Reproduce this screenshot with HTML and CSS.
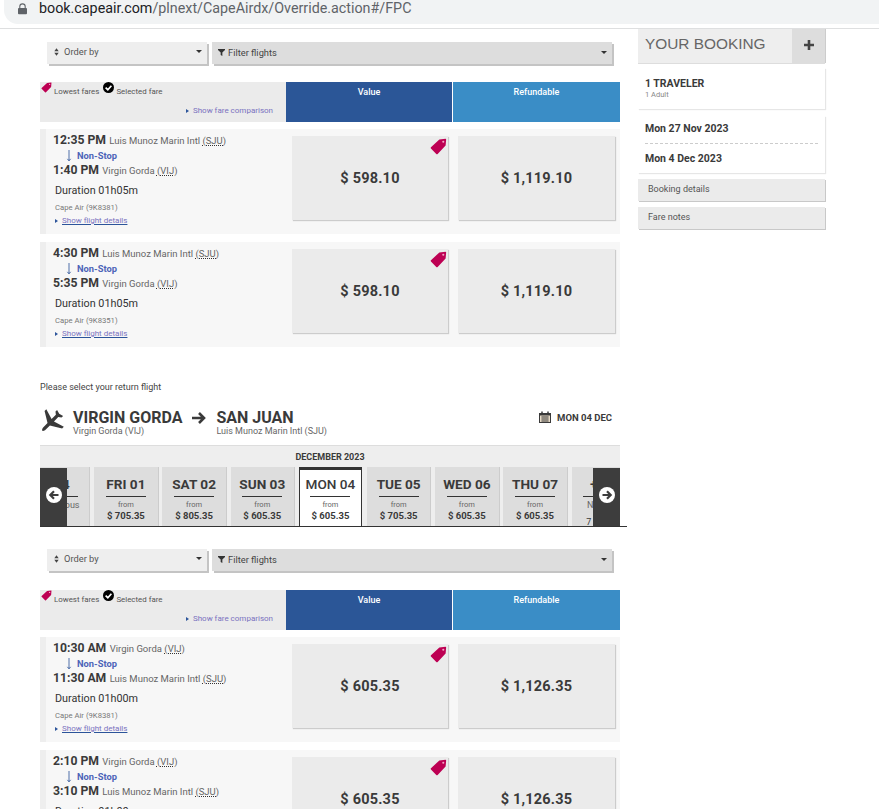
FILE: index.html
```html
<!DOCTYPE html>
<html lang="en">
<head>
<meta charset="utf-8">
<title>Cape Air booking</title>
<link rel="stylesheet" href="styles.css">
</head>
<body>
<svg class="defs" width="0" height="0" aria-hidden="true">
  <symbol id="tag" viewBox="0 0 16 16"><path d="M8.800 1.400 14.600.8c.4 0 .6.2.6.6l-.5 5.700-7.500 7.900c-.4.400-.9.400-1.300 0L.9 9.900c-.4-.4-.4-.9 0-1.300z" fill="#bd0053"/><circle cx="12.500" cy="3.500" r="1" fill="#f3a6c6"/></symbol>
  <symbol id="check" viewBox="0 0 16 16"><circle cx="8" cy="8" r="8" fill="#000"/><path d="M3.800 8.200 7 11.200l5.200-5.800" fill="none" stroke="#fff" stroke-width="2.400"/></symbol>
  <symbol id="down" viewBox="0 0 8 16"><path d="M4 0v14M1.800 11.800 4 14.500l2.200-2.700" fill="none" stroke="#2c549a" stroke-width="1.100"/></symbol>
  <symbol id="sort" viewBox="0 0 8 12"><path d="M4 0 7.500 4.800H.5zM4 12 .5 7.200h7z" fill="#444"/></symbol>
  <symbol id="funnel" viewBox="0 0 10 10"><path d="M0 0h10v1.300L6.200 5v5L3.800 8.500V5L0 1.300z" fill="#333"/></symbol>
  <symbol id="left" viewBox="0 0 16 16"><circle cx="8" cy="8" r="8" fill="#fff"/><path d="M12.500 8H5M8 4.300 4.300 8 8 11.700" fill="none" stroke="#3d3d3d" stroke-width="2.200"/></symbol>
  <symbol id="right" viewBox="0 0 16 16"><circle cx="8" cy="8" r="8" fill="#fff"/><path d="M3.500 8H11M8 4.300 11.700 8 8 11.700" fill="none" stroke="#3d3d3d" stroke-width="2.200"/></symbol>
</svg>

<header class="address">
  <div class="address-pill">
    <svg class="lock" viewBox="0 0 10 12"><path d="M2 5V3.300a3 3 0 0 1 6 0V5" fill="none" stroke="#5f6368" stroke-width="1.200"/><rect y="4.800" width="10" height="7" rx="1" fill="#5f6368"/></svg>
    <span class="url">book.capeair.com<span class="url-path">/plnext/CapeAirdx/Override.action#/FPC</span></span>
  </div>
</header>

<div class="page">
  <main class="flights">
    <div class="toolbar">
      <div class="select select-order"><svg class="ico-sort"><use href="#sort"/></svg><span class="select-label">Order by</span><i class="caret"></i></div>
      <div class="select select-filter"><svg class="ico-funnel"><use href="#funnel"/></svg><span class="select-label dark">Filter flights</span><i class="caret"></i></div>
    </div>
    <div class="fare-head">
      <div class="legend">
        <div class="legend-top"><svg class="ico-tag-s"><use href="#tag"/></svg><span>Lowest fares</span><svg class="ico-check"><use href="#check"/></svg><span>Selected fare</span></div>
        <div class="compare"><i class="tri"></i>Show fare comparison</div>
      </div>
      <div class="fare-col value">Value</div>
      <div class="fare-col refund">Refundable</div>
    </div>

    <article class="flight">
      <div class="info">
        <div class="line"><b>12:35 PM</b> Luis Munoz Marin Intl <abbr>(SJU)</abbr></div>
        <div class="stop"><svg class="ico-down"><use href="#down"/></svg>Non-Stop</div>
        <div class="line"><b>1:40 PM</b> Virgin Gorda <abbr>(VIJ)</abbr></div>
        <div class="duration">Duration 01h05m</div>
        <div class="carrier">Cape Air (9K8381)</div>
        <div class="details"><i class="tri"></i><a href="#">Show flight details</a></div>
      </div>
      <div class="fare">$ 598.10<svg class="ico-tag"><use href="#tag"/></svg></div>
      <div class="fare">$ 1,119.10</div>
    </article>
    <article class="flight">
      <div class="info">
        <div class="line"><b>4:30 PM</b> Luis Munoz Marin Intl <abbr>(SJU)</abbr></div>
        <div class="stop"><svg class="ico-down"><use href="#down"/></svg>Non-Stop</div>
        <div class="line"><b>5:35 PM</b> Virgin Gorda <abbr>(VIJ)</abbr></div>
        <div class="duration">Duration 01h05m</div>
        <div class="carrier">Cape Air (9K8351)</div>
        <div class="details"><i class="tri"></i><a href="#">Show flight details</a></div>
      </div>
      <div class="fare">$ 598.10<svg class="ico-tag"><use href="#tag"/></svg></div>
      <div class="fare">$ 1,119.10</div>
    </article>

    <p class="prompt">Please select your return flight</p>
    <div class="route">
      <svg class="plane" viewBox="0 0 24 24"><path transform="rotate(225 12 12)" d="M23 16.500v-2.200l-9.500-5.800V3c0-1-.7-2.500-1.500-2.500S10.500 2 10.500 3v5.500L1 14.300v2.200l9.500-2.900V19l-2.300 1.800v2L12 21.700l3.800 1.100v-2L13.500 19v-5.400z" fill="#3a3a3a"/></svg>
      <div class="place"><div class="city">VIRGIN GORDA</div><div class="airport">Virgin Gorda (VIJ)</div></div>
      <svg class="route-arrow" viewBox="0 0 14 12"><path d="M0 6h11M7 1l5 5-5 5" fill="none" stroke="#3a3a3a" stroke-width="2.600"/></svg>
      <div class="place"><div class="city">SAN JUAN</div><div class="airport">Luis Munoz Marin Intl (SJU)</div></div>
      <div class="route-date">
        <svg class="ico-cal" viewBox="0 0 12 12"><path d="M0 2h12v10H0z" fill="#3a3a3a"/><path d="M1 4.500h10V11H1z" fill="#e8dcc8"/><path d="M3 .5v3M9 .5v3" stroke="#3a3a3a" stroke-width="1.500"/><path d="M2 6h8M2 8h8M2 10h8M4 5v6M6 5v6M8 5v6" stroke="#3a3a3a" stroke-width=".6"/></svg>
        MON 04 DEC
      </div>
    </div>

    <section class="calendar">
      <div class="month">DECEMBER 2023</div>
      <div class="days">
        <div class="day"><div class="day-name">- 14</div><div class="from from-prev">Previous</div></div>
        <div class="day"><div class="day-name">FRI 01</div><div class="from">from</div><div class="price">$ 705.35</div></div>
        <div class="day"><div class="day-name">SAT 02</div><div class="from">from</div><div class="price">$ 805.35</div></div>
        <div class="day"><div class="day-name">SUN 03</div><div class="from">from</div><div class="price">$ 605.35</div></div>
        <div class="day day-active"><div class="day-name">MON 04</div><div class="from">from</div><div class="price">$ 605.35</div></div>
        <div class="day"><div class="day-name">TUE 05</div><div class="from">from</div><div class="price">$ 705.35</div></div>
        <div class="day"><div class="day-name">WED 06</div><div class="from">from</div><div class="price">$ 605.35</div></div>
        <div class="day"><div class="day-name">THU 07</div><div class="from">from</div><div class="price">$ 605.35</div></div>
        <div class="day"><div class="day-name">+ 14</div><div class="from from-next">Next</div><div class="more">7 days</div></div>
      </div>
      <div class="nav nav-prev"><svg class="ico-nav"><use href="#left"/></svg></div>
      <div class="nav nav-next"><svg class="ico-nav"><use href="#right"/></svg></div>
    </section>

    <div class="toolbar toolbar-second">
      <div class="select select-order"><svg class="ico-sort"><use href="#sort"/></svg><span class="select-label">Order by</span><i class="caret"></i></div>
      <div class="select select-filter"><svg class="ico-funnel"><use href="#funnel"/></svg><span class="select-label dark">Filter flights</span><i class="caret"></i></div>
    </div>
    <div class="fare-head">
      <div class="legend">
        <div class="legend-top"><svg class="ico-tag-s"><use href="#tag"/></svg><span>Lowest fares</span><svg class="ico-check"><use href="#check"/></svg><span>Selected fare</span></div>
        <div class="compare"><i class="tri"></i>Show fare comparison</div>
      </div>
      <div class="fare-col value">Value</div>
      <div class="fare-col refund">Refundable</div>
    </div>

    <article class="flight">
      <div class="info">
        <div class="line"><b>10:30 AM</b> Virgin Gorda <abbr>(VIJ)</abbr></div>
        <div class="stop"><svg class="ico-down"><use href="#down"/></svg>Non-Stop</div>
        <div class="line"><b>11:30 AM</b> Luis Munoz Marin Intl <abbr>(SJU)</abbr></div>
        <div class="duration">Duration 01h00m</div>
        <div class="carrier">Cape Air (9K8381)</div>
        <div class="details"><i class="tri"></i><a href="#">Show flight details</a></div>
      </div>
      <div class="fare">$ 605.35<svg class="ico-tag"><use href="#tag"/></svg></div>
      <div class="fare">$ 1,126.35</div>
    </article>
    <article class="flight">
      <div class="info">
        <div class="line"><b>2:10 PM</b> Virgin Gorda <abbr>(VIJ)</abbr></div>
        <div class="stop"><svg class="ico-down"><use href="#down"/></svg>Non-Stop</div>
        <div class="line"><b>3:10 PM</b> Luis Munoz Marin Intl <abbr>(SJU)</abbr></div>
        <div class="duration">Duration 01h00m</div>
      </div>
      <div class="fare">$ 605.35<svg class="ico-tag"><use href="#tag"/></svg></div>
      <div class="fare">$ 1,126.35</div>
    </article>
  </main>

  <aside class="booking">
    <div class="booking-head"><span class="booking-title">YOUR BOOKING</span><span class="booking-plus"><svg class="ico-plus" viewBox="0 0 10 10"><path d="M5 0v10M0 5h10" stroke="#444" stroke-width="2.600"/></svg></span></div>
    <div class="card travelers"><div class="card-strong">1 TRAVELER</div><div class="card-small">1 Adult</div></div>
    <div class="card dates">
      <div class="date">Mon 27 Nov 2023</div>
      <div class="date date-last">Mon 4 Dec 2023</div>
    </div>
    <div class="panel">Booking details</div>
    <div class="panel">Fare notes</div>
  </aside>
</div>
</body>
</html>
```

FILE: styles.css
```css
* { box-sizing: border-box; }
html, body { margin: 0; padding: 0; height: 809px; overflow: hidden; background: #fff; }
body { font-family: Roboto, "Liberation Sans", sans-serif; color: #3a3a3a; }
.defs { position: absolute; }

.address { height: 29px; border-bottom: 1px solid #dedfe0; padding: 0 0 4px 4px; }
.address-pill { height: 24px; background: #f1f3f4; border-bottom-left-radius: 14px; display: flex; align-items: center; padding-left: 14px; }
.lock { width: 9px; height: 12px; margin-right: 12px; margin-top: -7px; }
.url { font: 14.300px Roboto, sans-serif; color: #202124; margin-top: -9px; white-space: nowrap; }
.url-path { color: #5f6368; }

.page { display: flex; padding-left: 40px; }
.flights { width: 580px; flex: none; }
.booking { width: 187px; margin-left: 18px; flex: none; }

.toolbar { display: flex; height: 53px; padding: 13px 0 0 7px; gap: 5px; }
.toolbar-second { height: 63px; padding-top: 22px; }
.select { height: 22px; display: flex; align-items: center; box-shadow: 2px 2px 0 #c4c4c4; position: relative; font-size: 9.300px; padding-bottom: 1px; }
.select-order { width: 160px; background: #eee; padding-left: 7px; padding-bottom: 3px; }
.select-filter { width: 400px; background: #ddd; padding-left: 6px; }
.select-label { margin-left: 5px; color: #555; }
.select-label.dark { margin-left: 3px; color: #444; }
.ico-sort { width: 5px; height: 8px; }
.ico-funnel { width: 7px; height: 7px; }
.caret { margin-left: auto; margin-right: 5px; width: 0; height: 0; border-left: 3px solid transparent; border-right: 3px solid transparent; border-top: 3px solid #333; }

.fare-head { display: flex; height: 40px; margin-bottom: 7px; }
.legend { width: 246px; background: #ebebeb; padding-right: 13px; font-size: 7.900px; color: #555; }
.legend-top { display: flex; align-items: center; height: 16px; padding-left: 1px; }
.legend-top span { margin-left: 2px; margin-top: 2px; }
.ico-tag-s { width: 11px; height: 11px; margin-top: -5px; }
.ico-check { width: 11px; height: 11px; margin-left: 4px; margin-top: -5px; }
.compare { text-align: right; margin-top: 7px; color: #7a72c0; font-size: 8px; line-height: 12px; }
.tri { display: inline-block; width: 0; height: 0; border-top: 2.500px solid transparent; border-bottom: 2.500px solid transparent; border-left: 3px solid #2c549a; margin-right: 4px; }
.fare-col { color: #fff; font-size: 9px; font-weight: 500; text-align: center; padding-top: 5px; line-height: 11px; }
.value { width: 167px; background: #2b5697; border-right: 1px solid #fff; padding-right: 0; }
.refund { width: 167px; background: #3a8dc6; }

.flight { display: flex; height: 105px; margin-bottom: 8px; background: #f7f7f7; border-left: 6px solid #eee; padding: 7px 5px 0 0; }
.info { width: 246px; padding: 0 0 0 7px; margin-top: -3px; font-size: 9.500px; color: #666; flex: none; }
.line { height: 15px; line-height: 15px; white-space: nowrap; }
.line b { font-size: 12.200px; font-weight: 700; color: #3a3a3a; margin-right: 1px; }
abbr { text-decoration: underline dotted #333; }
.stop { height: 15px; line-height: 15px; padding-left: 13px; font-weight: 700; font-size: 9.300px; color: #4c63b8; display: flex; align-items: center; }
.ico-down { width: 6px; height: 14px; margin-right: 5px; }
.duration { margin-top: 4px; height: 18px; line-height: 18px; font-size: 10.800px; color: #333; padding-left: 2px; }
.carrier { margin-top: 1px; height: 14px; line-height: 14px; font-size: 7.700px; color: #777; padding-left: 2px; }
.details { height: 12px; line-height: 12px; font-size: 8px; padding-left: 2px; white-space: nowrap; }
.details a { color: #7a72c0; text-decoration-color: #2c549a; }

.fare { position: relative; width: 156px; height: 84px; background: #ebebeb; box-shadow: 1px 1px 1px #ccc; display: flex; align-items: center; justify-content: center; font-size: 14.500px; font-weight: 700; letter-spacing: .2px; color: #3a3a3a; margin-right: 10px; padding-top: 1px; }
.fare:last-child { margin-right: 0; width: 157px; }
.ico-tag { position: absolute; top: 2px; right: 1px; width: 17px; height: 17px; }

.prompt { margin: 33px 0 0; height: 14px; line-height: 14px; font-size: 9px; color: #444; }
.route { display: flex; align-items: flex-start; height: 51px; padding-top: 16px; position: relative; }
.plane { width: 27px; height: 27px; margin: -2px 8px 0 -2px; flex: none; }
.place { flex: none; }
.city { font-size: 16px; font-weight: 700; line-height: 16px; color: #3a3a3a; white-space: nowrap; }
.airport { font-size: 9px; line-height: 9px; margin-top: 1px; color: #666; white-space: nowrap; }
.route-arrow { width: 14px; height: 12px; margin: 2px 10px 0 10px; flex: none; }
.route-date { margin-left: auto; display: flex; align-items: center; gap: 6px; font-size: 9.500px; font-weight: 700; color: #3a3a3a; padding: 0 8px 0 0; height: 14px; }
.ico-cal { width: 12px; height: 12px; }

.calendar { position: relative; height: 82px; background: #eee; border-top: 1px solid #ddd; }
.calendar::after { content: ""; position: absolute; left: 0; right: -7px; bottom: 0; height: 1px; background: #333; }
.month { height: 21px; padding-top: 1px; line-height: 21px; text-align: center; font-size: 9px; font-weight: 700; color: #3a3a3a; }
.days { display: flex; gap: 4.800px; height: 60px; overflow: hidden; margin-left: -14px; width: 594px; clip-path: inset(0 0 0 14px); }
.day { flex: none; width: 63.400px; background: #ddd; text-align: center; box-shadow: 1px 0 0 #ccc; height: 60px; }
.day-name { width: 40px; margin: 0 auto; height: 30px; line-height: 34px; font-size: 13.600px; font-weight: 700; color: #3a3a3a; white-space: nowrap; display: flex; justify-content: center; border-bottom: 1px solid #333; }
.from { font-size: 7.500px; line-height: 10px; margin-top: 3px; color: #666; }
.from-prev { font-size: 9px; padding-left: 9px; }
.from-next { font-size: 9px; padding-right: 14px; }
.more { font-size: 9px; line-height: 10px; margin-top: 7px; padding-right: 8px; color: #3a3a3a; }
.price { font-size: 9.500px; font-weight: 700; line-height: 12px; color: #3a3a3a; }
.day-active { background: #fff; border: 1px solid #333; border-top-width: 3px; border-bottom: 0; box-shadow: none; }
.day-active .day-name { font-weight: 500; height: 27px; line-height: 29px; }
.nav { position: absolute; top: 22px; width: 27px; height: 58px; background: #3d3d3d; display: flex; align-items: center; justify-content: center; }
.nav-prev { left: 0; }
.nav-next { right: 0; }
.ico-nav { width: 16px; height: 16px; margin-top: -5px; }

.booking-head { height: 34px; background: #eee; display: flex; justify-content: space-between; align-items: center; padding-left: 7px; box-shadow: 0 1px 0 #ddd; }
.booking-title { font: 15.400px "Liberation Sans", Arial, sans-serif; color: #666; margin-top: -4px; }
.booking-plus { width: 33px; height: 34px; background: #ddd; display: flex; align-items: center; justify-content: center; box-shadow: 1px 0 0 #ccc; }
.ico-plus { width: 10px; height: 10px; margin-top: -3px; }
.card { background: #fff; box-shadow: 1px 1px 1px #e6e6e6; }
.travelers { height: 41px; margin-top: 5px; padding: 10px 7px 0; }
.card-strong { font-size: 10.500px; font-weight: 700; line-height: 12px; color: #3a3a3a; }
.card-small { font-size: 7.500px; line-height: 10px; color: #888; }
.dates { height: 57px; margin-top: 7px; padding: 0 7px; }
.date { font-size: 10.500px; font-weight: 700; line-height: 12px; color: #3a3a3a; height: 28px; padding-top: 7px; border-bottom: 1px dashed #ccc; }
.date-last { border-bottom: 0; height: 29px; padding-top: 9px; }
.panel { height: 22px; margin-top: 6px; background: #ebebeb; box-shadow: 1px 1px 0 #c8c8c8; font-size: 9px; line-height: 20px; color: #555; padding-left: 10px; }
```
